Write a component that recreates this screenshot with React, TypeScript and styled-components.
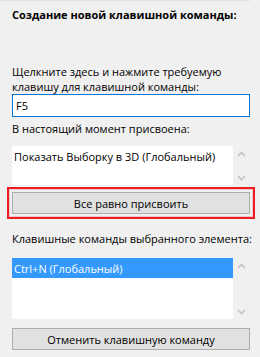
import React from 'react';
import styled, { createGlobalStyle } from 'styled-components';

const GlobalStyle = createGlobalStyle`
  html, body {
    margin: 0;
    padding: 0;
    background: #f0f0f0;
  }
  body {
    font-family: 'Open Sans', 'Noto Sans', sans-serif;
    font-size: 11px;
    color: #000;
  }
`;

const Panel = styled.div`
  width: 260px;
  height: 357px;
  box-sizing: border-box;
  background: #f0f0f0;
  display: flex;
  flex-direction: column;
  overflow: hidden;
`;

const TopEdge = styled.div`
  width: 250px;
  height: 1px;
  flex-shrink: 0;
  background: #e2e2e2;
`;

const Content = styled.div`
  display: flex;
  flex-direction: column;
  padding: 0 10px 0 12px;
`;

const Title = styled.div`
  margin-top: 6px;
  font-weight: 700;
  line-height: 16px;
  white-space: nowrap;
`;

const Label = styled.div<{ $mt: number }>`
  margin-top: ${(p) => p.$mt}px;
  line-height: 15px;
  white-space: nowrap;
`;

const KeyInput = styled.div`
  height: 23px;
  box-sizing: border-box;
  border: 1px solid #0078d7;
  background: #fff;
  padding: 0 3px;
  display: flex;
  align-items: center;
  line-height: 15px;
`;

const ListBox = styled.div<{ $h: number; $mt: number }>`
  margin-top: ${(p) => p.$mt}px;
  height: ${(p) => p.$h}px;
  display: flex;
`;

const ListBody = styled.div`
  flex: 1;
  background: #fff;
  display: flex;
  flex-direction: column;
`;

const ListItem = styled.div<{ $selected?: boolean }>`
  height: 20px;
  padding: 0 2px;
  display: flex;
  align-items: center;
  white-space: nowrap;
  background: ${(p) => (p.$selected ? '#3399ff' : 'transparent')};
  color: ${(p) => (p.$selected ? '#fff' : '#000')};
`;

const ScrollBar = styled.div`
  width: 17px;
  display: flex;
  flex-direction: column;
  justify-content: space-between;
  align-items: center;
  padding: 5px 0 4px;
  box-sizing: border-box;
  color: #c3c3c3;

  svg {
    width: 9px;
    height: 6px;
  }
`;

const Highlight = styled.div`
  margin: 2px -5px 0;
  padding: 3px;
  border: 2px solid #ec1c24;
  box-shadow: inset 0 0 0 1px rgba(236, 28, 36, 0.18);
`;

const Button = styled.div<{ $mt?: number }>`
  margin-top: ${(p) => p.$mt ?? 0}px;
  height: 22px;
  box-sizing: border-box;
  border: 1px solid #adadad;
  background: #e1e1e1;
  display: flex;
  align-items: center;
  justify-content: center;
`;

function Chevron({ up }: { up: boolean }) {
  return (
    <svg viewBox="0 0 9 6" fill="none" stroke="currentColor" strokeWidth="1.6">
      {up ? <polyline points="1,5 4.5,1.5 8,5" /> : <polyline points="1,1 4.5,4.5 8,1" />}
    </svg>
  );
}

function Scroll() {
  return (
    <ScrollBar>
      <Chevron up />
      <Chevron up={false} />
    </ScrollBar>
  );
}

export default function App() {
  return (
    <>
      <GlobalStyle />
      <Panel>
        <TopEdge />
        <Content>
          <Title>Создание новой клавишной команды:</Title>
          <Label $mt={41}>
            Щелкните здесь и нажмите требуемую
            <br />
            клавишу для клавишной команды:
          </Label>
          <KeyInput>F5</KeyInput>
          <Label $mt={4}>В настоящий момент присвоена:</Label>
          <ListBox $h={39} $mt={10}>
            <ListBody>
              <ListItem>Показать Выборку в 3D (Глобальный)</ListItem>
            </ListBody>
            <Scroll />
          </ListBox>
          <Highlight>
            <Button>Все равно присвоить</Button>
          </Highlight>
          <Label $mt={12}>Клавишные команды выбранного элемента:</Label>
          <ListBox $h={61} $mt={12}>
            <ListBody>
              <ListItem $selected>Ctrl+N (Глобальный)</ListItem>
            </ListBody>
            <Scroll />
          </ListBox>
          <Button $mt={9}>Отменить клавишную команду</Button>
        </Content>
      </Panel>
    </>
  );
}
